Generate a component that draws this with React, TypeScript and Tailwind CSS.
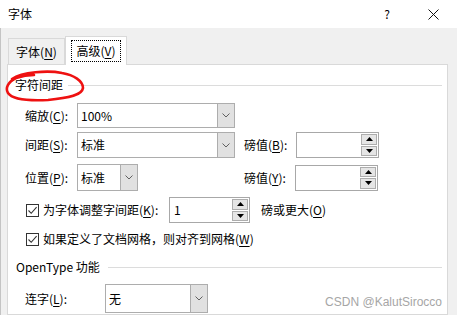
import React from "react";

const font = { fontFamily: '"Noto Sans CJK SC", "Microsoft YaHei", sans-serif' };

function Key({ k }: { k: string }) {
  return (
    <>
      (<span className="underline underline-offset-2">{k}</span>)
    </>
  );
}

function Chevron() {
  return (
    <svg width="8" height="5" viewBox="0 0 8 5">
      <path d="M0.5 0.5 L4 4 L7.5 0.5" fill="none" stroke="#606060" strokeWidth="1" />
    </svg>
  );
}

function Combo({ value, width, height = 26 }: { value: string; width: number; height?: number }) {
  return (
    <div
      className="flex border border-[#adadad] bg-white"
      style={{ width, height }}
    >
      <div className="flex-1 flex items-center pl-[3px] text-[12px] text-black">{value}</div>
      <div className="w-[17px] flex items-center justify-center bg-[#e1e1e1] border-l border-[#adadad]">
        <Chevron />
      </div>
    </div>
  );
}

function Spin({ value = "", width, height = 26 }: { value?: string; width: number; height?: number }) {
  return (
    <div className="flex border border-[#a8a8a8] bg-white" style={{ width, height }}>
      <div className="flex-1 flex items-center pl-[4px] text-[12px] text-black">{value}</div>
      <div className="w-[17px] flex flex-col gap-[1px] p-[1px] pl-0">
        <div className="flex-1 flex items-center justify-center bg-[#e5e5e5] border border-[#adadad]">
          <svg width="7" height="4" viewBox="0 0 7 4">
            <path d="M0 4 L3.5 0 L7 4 Z" fill="#000" />
          </svg>
        </div>
        <div className="flex-1 flex items-center justify-center bg-[#e5e5e5] border border-[#adadad]">
          <svg width="7" height="4" viewBox="0 0 7 4">
            <path d="M0 0 L7 0 L3.5 4 Z" fill="#000" />
          </svg>
        </div>
      </div>
    </div>
  );
}

function Check() {
  return (
    <div className="w-[13px] h-[13px] border border-[#333] bg-white flex items-center justify-center">
      <svg width="11" height="11" viewBox="0 0 11 11">
        <path d="M1.5 5.5 L4.2 8.3 L9.6 2.2" fill="none" stroke="#333" strokeWidth="1.1" />
      </svg>
    </div>
  );
}

function GroupHeader({ title, lineFrom }: { title: string; lineFrom: number }) {
  return (
    <div className="h-[20px] flex items-center text-[12px] text-black">
      <span style={{ width: lineFrom }}>{title}</span>
      <div className="flex-1 h-px bg-[#dcdcdc] mr-[5px]" />
    </div>
  );
}

export default function App() {
  return (
    <div className="relative w-[457px] h-[315px] overflow-hidden bg-[#f0f0f0] flex flex-col" style={font}>
      <div className="h-[28px] bg-white flex items-center pl-[8px] text-[12px] text-black shrink-0">
        <span className="flex-1">字体</span>
        <span className="w-[12px] text-center mr-[35px]">?</span>
        <svg width="11" height="11" viewBox="0 0 11 11" className="mr-[18px]">
          <path d="M0.5 0.5 L10.5 10.5 M10.5 0.5 L0.5 10.5" stroke="#111" strokeWidth="1" />
        </svg>
      </div>

      <div className="flex-1 flex flex-col border-l border-[#c4c4c4] pl-[6px] pr-[9px]">
        <div className="h-[36px] flex items-end shrink-0 relative z-10">
          <div className="ml-[1px] w-[57px] h-[26px] border border-b-0 border-[#d9d9d9] flex items-center justify-center text-[12px] text-black">
            字体<Key k="N" />
          </div>
          <div className="w-[62px] h-[29px] -mb-px bg-white border border-b-0 border-[#d9d9d9] flex items-center justify-center">
            <div className="w-[50px] h-[22px] border border-dotted border-black flex items-center justify-center text-[12px] text-black">
              高级<Key k="V" />
            </div>
          </div>
        </div>

        <div className="flex-1 bg-white border border-[#d9d9d9] pl-[17px] text-[12px] text-black">
          <div className="mt-[10px] -ml-[10px]">
            <GroupHeader title="字符间距" lineFrom={53} />
          </div>

          <div className="mt-[8px] flex items-center">
            <span className="w-[52px]">缩放<Key k="C" />:</span>
            <Combo value="100%" width={158} height={25} />
          </div>

          <div className="mt-[4px] flex items-center">
            <span className="w-[52px]">间距<Key k="S" />:</span>
            <div className="w-[158px]">
              <Combo value="标准" width={158} />
            </div>
            <span className="ml-[9px] w-[52px]">磅值<Key k="B" />:</span>
            <Spin width={83} height={26} />
          </div>

          <div className="mt-[6px] flex items-center">
            <span className="w-[52px]">位置<Key k="P" />:</span>
            <div className="w-[158px]">
              <Combo value="标准" width={61} height={27} />
            </div>
            <span className="ml-[9px] w-[51px]">磅值<Key k="Y" />:</span>
            <Spin width={83} height={26} />
          </div>

          <div className="mt-[6px] flex items-center">
            <span className="ml-px mr-[4px]"><Check /></span>
            <span className="w-[126px]">为字体调整字间距<Key k="K" />:</span>
            <Spin value="1" width={81} height={26} />
            <span className="ml-[11px]">磅或更大<Key k="O" /></span>
          </div>

          <div className="mt-[6px] h-[20px] flex items-center">
            <span className="ml-px mr-[4px]"><Check /></span>
            <span>如果定义了文档网格，则对齐到网格<Key k="W" /></span>
          </div>

          <div className="mt-[8px] -ml-[9px]">
            <GroupHeader title="OpenType 功能" lineFrom={92} />
          </div>

          <div className="mt-[7px] flex items-center">
            <span className="w-[80px]">连字<Key k="L" />:</span>
            <Combo value="无" width={103} height={29} />
          </div>
        </div>
      </div>

      <span className="absolute right-[15px] top-[293px] text-[12px] text-[#a6a6a6]" style={{ fontFamily: '"Liberation Sans", Arial, sans-serif' }}>
        CSDN @KalutSirocco
      </span>

      <svg className="absolute left-0 top-0 pointer-events-none" width="100" height="110" viewBox="0 0 100 110">
        <path
          d="M12 79 C 22 72, 48 70, 62 73 C 74 75, 83 81, 83 88 C 82 95, 70 98, 48 100 C 28 101, 12 99, 8 93 C 5 88, 8 82, 16 78 C 22 76, 28 75, 34 75"
          fill="none"
          stroke="#ee1111"
          strokeWidth="2.6"
          strokeLinecap="round"
        />
      </svg>
    </div>
  );
}
